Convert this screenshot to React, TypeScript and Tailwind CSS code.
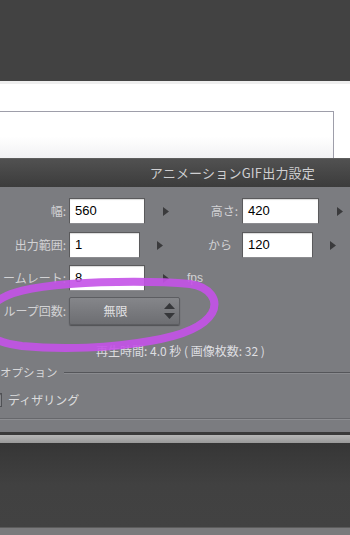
import React from 'react';

const jp = { fontFamily: '"Noto Sans CJK JP", "Noto Sans", sans-serif' };
const latin = { fontFamily: '"Liberation Sans", Arial, sans-serif' };

const Arrow: React.FC = () => (
  <svg width="6" height="9" viewBox="0 0 6 9" className="shrink-0">
    <polygon points="0,0 6,4.5 0,9" fill="#3a3a3c" />
  </svg>
);

interface FieldProps {
  value: string;
  width: string;
}

const Field: React.FC<FieldProps> = ({ value, width }) => (
  <div
    className={`${width} h-[26px] bg-white border border-[#5a5a5c] border-b-[#8c8c90] flex items-center pl-[5px] text-[13px] text-black shadow-[inset_0_1px_1px_rgba(0,0,0,0.15)]`}
    style={latin}
  >
    {value}
  </div>
);

const Label: React.FC<{ text: string; width: string }> = ({ text, width }) => (
  <div className={`${width} shrink-0 flex justify-end whitespace-nowrap text-[12px] text-[#d2d2d4]`} style={jp}>
    <span>{text}</span>
  </div>
);

const App: React.FC = () => {
  return (
    <div className="relative w-[350px] h-[535px] overflow-hidden bg-[#424242]" style={jp}>
      {/* top dark bar */}
      <div className="h-[81px] bg-[#424242]" />

      {/* white canvas area */}
      <div className="h-[77px] bg-white border-t-[3px] border-[#eeeeee] pt-[27px]">
        <div className="w-[334px] h-[50px] border-t border-r border-[#9e9eaa] bg-gradient-to-b from-white via-white to-[#f0f0f2]" />
      </div>

      {/* dialog title */}
      <div className="h-[29px] bg-gradient-to-b from-[#515151] to-[#3c3c3c] border-t border-[#5e5e5e] flex items-center justify-end pr-[35px]">
        <span className="text-[13px] text-[#cfcfd1] tracking-[0.2px]">アニメーションGIF出力設定</span>
      </div>

      {/* dialog body */}
      <div className="h-[245px] bg-[#7b7c80] pt-[11px] flex flex-col">
        <div className="flex items-center h-[26px]">
          <div className="w-[200px] flex items-center shrink-0">
            <Label text="幅:" width="w-[66px]" />
            <div className="ml-[3px]"><Field value="560" width="w-[76px]" /></div>
            <div className="ml-[18px]"><Arrow /></div>
          </div>
          <Label text="高さ:" width="w-[38px]" />
          <div className="ml-[4px]"><Field value="420" width="w-[77px]" /></div>
          <div className="ml-[18px]"><Arrow /></div>
        </div>

        <div className="flex items-center h-[26px] mt-[8px]">
          <div className="w-[200px] flex items-center shrink-0">
            <Label text="出力範囲:" width="w-[66px]" />
            <div className="ml-[3px]"><Field value="1" width="w-[71px]" /></div>
            <div className="ml-[17px]"><Arrow /></div>
          </div>
          <div className="w-[38px] shrink-0 flex justify-start pl-[8px] text-[12px] text-[#d2d2d4]">から</div>
          <div className="ml-[4px]"><Field value="120" width="w-[71px]" /></div>
          <div className="ml-[17px]"><Arrow /></div>
        </div>

        <div className="flex items-center h-[26px] mt-[7px]">
          <Label text="ームレート:" width="w-[66px]" />
          <div className="ml-[3px]"><Field value="8" width="w-[76px]" /></div>
          <div className="ml-[18px]"><Arrow /></div>
          <span className="ml-[18px] text-[12px] text-[#d2d2d4]" style={latin}>fps</span>
        </div>

        <div className="flex items-center h-[28px] mt-[6px]">
          <Label text="ループ回数:" width="w-[66px]" />
          <div className="ml-[3px] w-[111px] h-[28px] flex items-center rounded-[2px] border border-[#5c5d61] bg-gradient-to-b from-[#85868a] to-[#6d6e72] shadow-[0_1px_1px_rgba(0,0,0,0.35)]">
            <div className="flex-1 flex justify-center text-[12px] text-[#e2e2e4]">無限</div>
            <div className="w-[18px] flex flex-col items-center gap-[4px] pr-[2px]">
              <svg width="11" height="6" viewBox="0 0 11 6"><polygon points="0,6 5.5,0 11,6" fill="#36373a" /></svg>
              <svg width="11" height="6" viewBox="0 0 11 6"><polygon points="0,0 11,0 5.5,6" fill="#36373a" /></svg>
            </div>
          </div>
        </div>

        <div className="mt-[18px] h-[16px] pl-[96px] flex items-center text-[12px] text-[#dedee0] whitespace-nowrap">
          再生時間: 4.0 秒 ( 画像枚数: 32 )
        </div>

        <div className="mt-[7px] h-[14px] flex items-center">
          <span className="text-[11.5px] text-[#d8d8da] whitespace-nowrap">オプション</span>
          <div className="ml-[6px] flex-1 h-[2px] border-t border-[#55565a] border-b border-b-[#8a8b8f]" />
        </div>

        <div className="mt-[12px] h-[16px] flex items-center">
          <div className="-ml-[11px] w-[13px] h-[14px] border border-[#505155] bg-[#8a8b8f] shadow-[inset_0_1px_1px_rgba(0,0,0,0.3)]" />
          <span className="ml-[6px] text-[12px] text-[#dcdcde] whitespace-nowrap">ディザリング</span>
        </div>

        <div className="mt-[10px] h-[2px] border-t border-[#66676b] border-b border-b-[#8c8d91]" />
      </div>

      {/* bottom strips */}
      <div className="h-[3px] bg-[#3a3a3a]" />
      <div className="h-[8px] bg-gradient-to-b from-[#b6b6b6] to-[#9a9a9a]" />
      <div className="h-[84px] bg-gradient-to-b from-[#363636] via-[#414141] to-[#424242]" />
      <div className="h-[1px] bg-[#5c5c5c]" />
      <div className="h-[7px] bg-[#7a7a7c]" />

      {/* hand-drawn highlight over the loop count field */}
      <svg className="absolute left-0 top-0 pointer-events-none" width="350" height="535" viewBox="0 0 350 535">
        <path
          d="M -6 304 C 6 292, 32 287, 70 284 C 110 281, 160 281, 190 284 C 210 287, 219 300, 212 313 C 204 327, 180 336, 150 341 C 112 348, 62 350, 22 346 C 6 344, -4 340, -10 336"
          fill="none"
          stroke="#c452e8"
          strokeWidth="8"
          strokeLinecap="round"
          strokeOpacity="0.9"
        />
      </svg>
    </div>
  );
};

export default App;
